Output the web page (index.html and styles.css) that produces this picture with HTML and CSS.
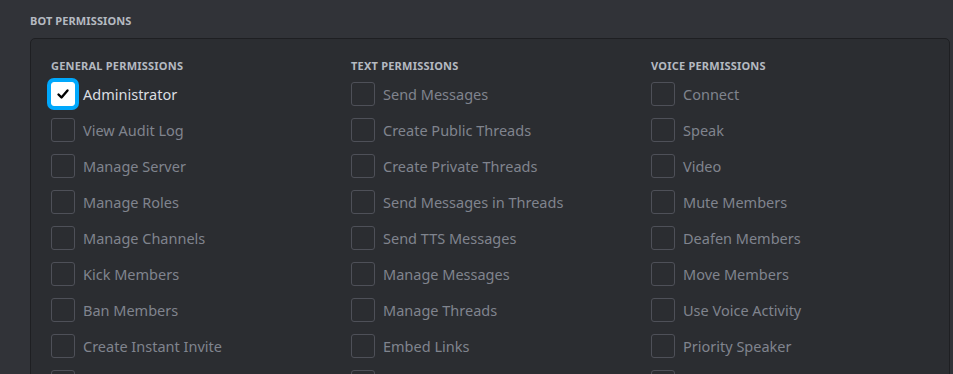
FILE: index.html
```html
<!DOCTYPE html>
<html lang="en">
<head>
    <meta charset="UTF-8">
    <title>Bot Permissions</title>
    <link rel="stylesheet" href="styles.css">
</head>
<body>
    <section class="permissions">
        <h2 class="section-title">Bot Permissions</h2>
        <div class="perm-panel">
            <div class="perm-column">
                <h3>General Permissions</h3>
                <label class="perm-row checked">
                    <span class="box">
                        <svg viewBox="0 0 24 24" width="24" height="24"><path d="M7.5 12.5l3 3 6-7" fill="none" stroke="#000" stroke-width="2.4" stroke-linecap="round" stroke-linejoin="round"/></svg>
                    </span>
                    <span class="name">Administrator</span>
                </label>
                <label class="perm-row"><span class="box"></span><span class="name">View Audit Log</span></label>
                <label class="perm-row"><span class="box"></span><span class="name">Manage Server</span></label>
                <label class="perm-row"><span class="box"></span><span class="name">Manage Roles</span></label>
                <label class="perm-row"><span class="box"></span><span class="name">Manage Channels</span></label>
                <label class="perm-row"><span class="box"></span><span class="name">Kick Members</span></label>
                <label class="perm-row"><span class="box"></span><span class="name">Ban Members</span></label>
                <label class="perm-row"><span class="box"></span><span class="name">Create Instant Invite</span></label>
                <label class="perm-row"><span class="box"></span></label>
            </div>
            <div class="perm-column">
                <h3>Text Permissions</h3>
                <label class="perm-row"><span class="box"></span><span class="name">Send Messages</span></label>
                <label class="perm-row"><span class="box"></span><span class="name">Create Public Threads</span></label>
                <label class="perm-row"><span class="box"></span><span class="name">Create Private Threads</span></label>
                <label class="perm-row"><span class="box"></span><span class="name">Send Messages in Threads</span></label>
                <label class="perm-row"><span class="box"></span><span class="name">Send TTS Messages</span></label>
                <label class="perm-row"><span class="box"></span><span class="name">Manage Messages</span></label>
                <label class="perm-row"><span class="box"></span><span class="name">Manage Threads</span></label>
                <label class="perm-row"><span class="box"></span><span class="name">Embed Links</span></label>
                <label class="perm-row"><span class="box"></span></label>
            </div>
            <div class="perm-column">
                <h3>Voice Permissions</h3>
                <label class="perm-row"><span class="box"></span><span class="name">Connect</span></label>
                <label class="perm-row"><span class="box"></span><span class="name">Speak</span></label>
                <label class="perm-row"><span class="box"></span><span class="name">Video</span></label>
                <label class="perm-row"><span class="box"></span><span class="name">Mute Members</span></label>
                <label class="perm-row"><span class="box"></span><span class="name">Deafen Members</span></label>
                <label class="perm-row"><span class="box"></span><span class="name">Move Members</span></label>
                <label class="perm-row"><span class="box"></span><span class="name">Use Voice Activity</span></label>
                <label class="perm-row"><span class="box"></span><span class="name">Priority Speaker</span></label>
                <label class="perm-row"><span class="box"></span></label>
            </div>
        </div>
    </section>
</body>
</html>
```

FILE: styles.css
```css
/* Bot permissions panel */
* {
    margin: 0;
    padding: 0;
    box-sizing: border-box;
}
body {
    background: #313338;
    font-family: 'Noto Sans', 'Open Sans', sans-serif;
    overflow: hidden;
    height: 374px;
}
.permissions {
    padding: 14px 3px 0 30px;
}
.section-title {
    font-size: 11px;
    font-weight: 700;
    text-transform: uppercase;
    color: #b5bac1;
    letter-spacing: 0.01em;
    line-height: 14px;
    margin-bottom: 10px;
}
.perm-panel {
    display: grid;
    grid-template-columns: 300px 300px 1fr;
    background: #2b2d31;
    border: 1px solid #1e1f22;
    border-radius: 5px;
    padding: 19px 20px 0 20px;
}
.perm-column {
    display: flex;
    flex-direction: column;
    gap: 12px;
}
.perm-column h3 {
    font-size: 11px;
    font-weight: 700;
    text-transform: uppercase;
    color: #b5bac1;
    letter-spacing: 0.02em;
    line-height: 14px;
    margin-top: 1px;
    margin-bottom: -3px;
}
.perm-row {
    display: flex;
    align-items: center;
    gap: 8px;
    height: 24px;
    flex: none;
}
.box {
    width: 24px;
    height: 24px;
    border: 1px solid #4e5058;
    border-radius: 3px;
    flex: none;
}
.name {
    font-size: 14.5px;
    color: #80848e;
}
.checked .box {
    background: #fff;
    border-color: #fff;
    box-shadow: 0 0 0 4px #00a8fc;
}
.checked .box svg {
    display: block;
    margin: -1px;
}
.checked .name {
    color: #dbdee1;
}
```
